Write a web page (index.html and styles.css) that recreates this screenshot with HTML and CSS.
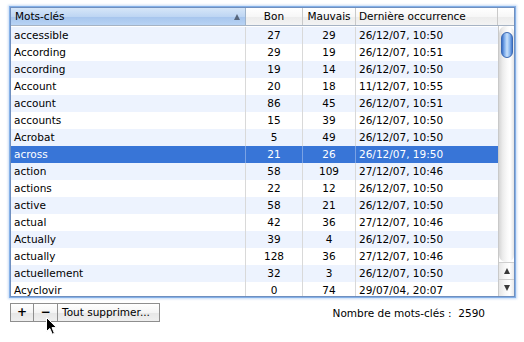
FILE: index.html
```html
<!DOCTYPE html>
<html lang="fr">
<head>
<meta charset="utf-8">
<title>Mots-clés</title>
<link rel="stylesheet" href="styles.css">
</head>
<body>
<div class="window">
  <div class="table">
    <div class="header">
      <div class="hcell sorted"><span>Mots-clés</span><span class="sort-arrow"></span></div>
      <div class="hcell center">Bon</div>
      <div class="hcell center">Mauvais</div>
      <div class="hcell">Dernière occurrence</div>
      <div class="hcell corner"></div>
    </div>
    <div class="body">
      <div class="rows">
        <div class="row"><div class="c c1">accessible</div><div class="c num">27</div><div class="c num">29</div><div class="c c4">26/12/07, 10:50</div></div>
        <div class="row"><div class="c c1">According</div><div class="c num">29</div><div class="c num">19</div><div class="c c4">26/12/07, 10:51</div></div>
        <div class="row"><div class="c c1">according</div><div class="c num">19</div><div class="c num">14</div><div class="c c4">26/12/07, 10:50</div></div>
        <div class="row"><div class="c c1">Account</div><div class="c num">20</div><div class="c num">18</div><div class="c c4">11/12/07, 10:55</div></div>
        <div class="row"><div class="c c1">account</div><div class="c num">86</div><div class="c num">45</div><div class="c c4">26/12/07, 10:51</div></div>
        <div class="row"><div class="c c1">accounts</div><div class="c num">15</div><div class="c num">39</div><div class="c c4">26/12/07, 10:50</div></div>
        <div class="row"><div class="c c1">Acrobat</div><div class="c num">5</div><div class="c num">49</div><div class="c c4">26/12/07, 10:50</div></div>
        <div class="row selected"><div class="c c1">across</div><div class="c num">21</div><div class="c num">26</div><div class="c c4">26/12/07, 19:50</div></div>
        <div class="row"><div class="c c1">action</div><div class="c num">58</div><div class="c num">109</div><div class="c c4">27/12/07, 10:46</div></div>
        <div class="row"><div class="c c1">actions</div><div class="c num">22</div><div class="c num">12</div><div class="c c4">26/12/07, 10:50</div></div>
        <div class="row"><div class="c c1">active</div><div class="c num">58</div><div class="c num">21</div><div class="c c4">26/12/07, 10:50</div></div>
        <div class="row"><div class="c c1">actual</div><div class="c num">42</div><div class="c num">36</div><div class="c c4">27/12/07, 10:46</div></div>
        <div class="row"><div class="c c1">Actually</div><div class="c num">39</div><div class="c num">4</div><div class="c c4">26/12/07, 10:50</div></div>
        <div class="row"><div class="c c1">actually</div><div class="c num">128</div><div class="c num">36</div><div class="c c4">27/12/07, 10:46</div></div>
        <div class="row"><div class="c c1">actuellement</div><div class="c num">32</div><div class="c num">3</div><div class="c c4">26/12/07, 10:50</div></div>
        <div class="row"><div class="c c1">Acyclovir</div><div class="c num">0</div><div class="c num">74</div><div class="c c4">29/07/04, 20:07</div></div>
      </div>
      <div class="scrollbar">
        <div class="track"><div class="thumb"></div></div>
        <div class="sbtn"><span class="tri up"></span></div>
        <div class="sbtn"><span class="tri down"></span></div>
      </div>
    </div>
  </div>
  <div class="footer">
    <div class="buttons">
      <div class="btn plus">+</div>
      <div class="btn minus">−</div>
      <div class="btn wide">Tout supprimer...</div>
    </div>
    <div class="count">Nombre de mots-clés :&nbsp; 2590</div>
  </div>
  <svg class="cursor" width="14" height="20" viewBox="0 0 14 20">
    <path d="M1.5 1.5 L1.5 15.5 L4.8 12.4 L7.3 18.2 L9.4 17.3 L7 11.6 L11.5 11.6 Z" fill="#000" stroke="#fff" stroke-width="1" stroke-linejoin="round"/>
  </svg>
</div>
</body>
</html>
```
FILE: styles.css
```css
html, body {
  margin: 0;
  padding: 0;
  background: #fff;
}
body {
  font-family: "DejaVu Sans", "Liberation Sans", sans-serif;
  font-size: 10.5px;
  color: #000;
}
.window {
  position: relative;
  width: 524px;
  height: 342px;
  overflow: hidden;
}
.table {
  margin: 7px 0 0 10px;
  width: 503px;
  border: 1px solid #6f8fbf;
  box-shadow: 0 0 0 1px rgba(110, 160, 225, 0.75), 0 0 2px 2px rgba(130, 175, 235, 0.45);
}
.header {
  display: grid;
  grid-template-columns: 235px 57px 53px 142px 16px;
  height: 17px;
  border-bottom: 1px solid #a6b3c4;
}
.hcell {
  display: flex;
  align-items: center;
  padding-left: 3px;
  line-height: 17px;
  border-right: 1px solid #c9c9c9;
  background: linear-gradient(#ffffff, #f7f7f7 50%, #ececec 51%, #f3f3f3);
  white-space: nowrap;
  overflow: hidden;
}
.hcell.center {
  justify-content: center;
  padding-left: 0;
}
.hcell.sorted {
  padding-left: 4px;
  background: linear-gradient(#d6e6f8, #bed6f3 50%, #a6c5ed 51%, #b8d3f4);
  border-right-color: #9fb4cc;
}
.hcell.corner {
  border-right: none;
  padding-left: 0;
}
.sort-arrow {
  margin-left: auto;
  margin-right: 5px;
  width: 0;
  height: 0;
  border-left: 3.5px solid transparent;
  border-right: 3.5px solid transparent;
  border-bottom: 6px solid #56667c;
}
.body {
  display: flex;
  height: 270px;
  overflow: hidden;
}
.rows {
  width: 487px;
  padding-top: 1px;
}
.row {
  display: grid;
  grid-template-columns: 235px 57px 53px 142px;
  height: 17px;
  line-height: 17px;
}
.row:nth-child(odd) {
  background: #edf3fe;
}
.row.selected {
  background: #3875d7;
  color: #fff;
}
.c {
  border-right: 1px solid #d9d9d9;
  white-space: nowrap;
  overflow: hidden;
}
.row.selected .c {
  border-right-color: #7aa2e4;
}
.c1 {
  padding-left: 3px;
}
.num {
  text-align: center;
}
.c4 {
  padding-left: 3px;
  border-right: none;
}
.scrollbar {
  width: 15px;
  border-left: 1px solid #c9c9c9;
  display: flex;
  flex-direction: column;
  background: #fff;
}
.track {
  flex: 1;
  padding-top: 6px;
  background: linear-gradient(to right, #d6d6d6, #ececec 25%, #fafafa 55%, #ffffff 75%, #e4e4e4);
  border-radius: 7px;
  display: flex;
  justify-content: center;
}
.thumb {
  width: 10px;
  height: 24px;
  border: 1px solid #3b69b3;
  border-radius: 6px;
  background: linear-gradient(to right, #3a6fc6, #7fadeb 25%, #c9e1fb 50%, #8fbaf0 75%, #4479cd);
}
.sbtn {
  height: 17px;
  display: flex;
  align-items: center;
  justify-content: center;
  border-top: 1px solid #cfcfcf;
  background: linear-gradient(to right, #e6e6e6, #f7f7f7 40%, #ffffff 70%, #e9e9e9);
  box-sizing: border-box;
}
.tri {
  width: 0;
  height: 0;
  border-left: 3.5px solid transparent;
  border-right: 3.5px solid transparent;
}
.tri.up {
  border-bottom: 6px solid #3a3a3a;
}
.tri.down {
  border-top: 6px solid #3a3a3a;
}
.footer {
  display: flex;
  align-items: center;
  margin-top: 6px;
  padding-left: 10px;
  padding-right: 39px;
}
.buttons {
  display: flex;
  height: 17px;
  border: 1px solid #8e8e8e;
  background: linear-gradient(#ffffff, #f4f4f4 50%, #e6e6e6 51%, #efefef);
}
.btn {
  line-height: 17px;
  text-align: center;
}
.btn.plus {
  width: 22px;
  font-weight: bold;
  font-size: 12px;
}
.btn.minus {
  width: 23px;
  border-left: 1px solid #8e8e8e;
  font-weight: bold;
  font-size: 12px;
}
.btn.wide {
  width: 102px;
  border-left: 1px solid #8e8e8e;
  text-align: left;
  padding-left: 4px;
  box-sizing: border-box;
}
.count {
  margin-left: auto;
}
.cursor {
  position: absolute;
  left: 45px;
  top: 316px;
}
```
